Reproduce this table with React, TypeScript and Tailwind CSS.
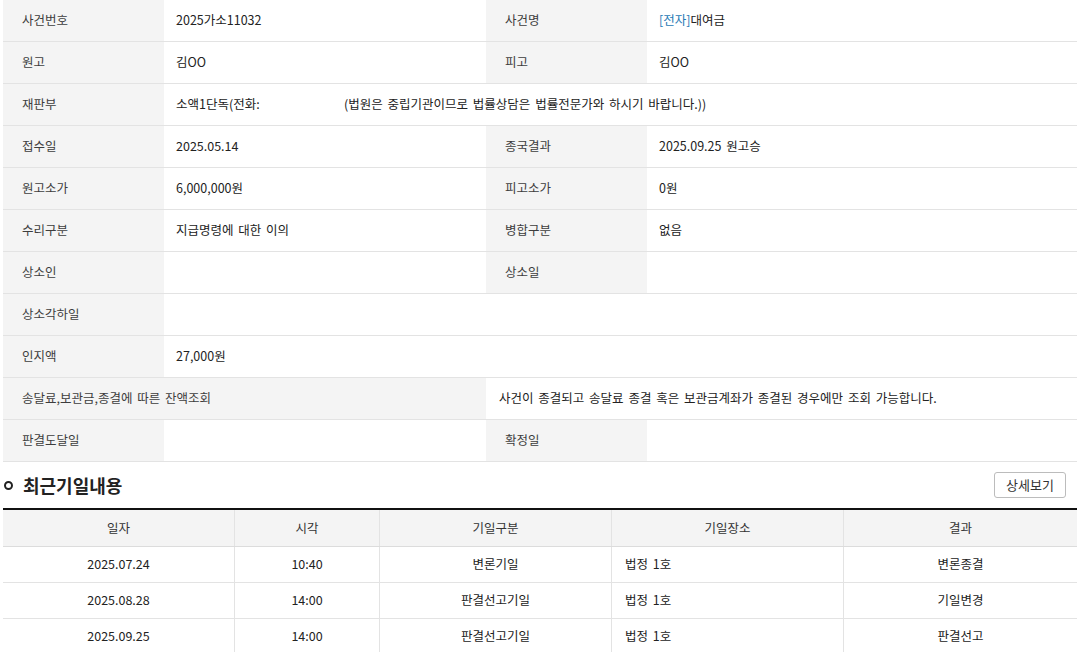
const font = { fontFamily: '"Noto Sans CJK KR", "Noto Sans", sans-serif' };

type Cell = { label: string; value?: React.ReactNode; span?: boolean };

const rows: (Cell[] | "money")[] = [
  [
    { label: "사건번호", value: "2025가소11032" },
    {
      label: "사건명",
      value: (
        <>
          <span className="text-[#1f7ab5]">[전자]</span>대여금
        </>
      ),
    },
  ],
  [
    { label: "원고", value: "김OO" },
    { label: "피고", value: "김OO" },
  ],
  [
    {
      label: "재판부",
      value: (
        <>
          <span className="inline-block w-[168px]">소액1단독(전화:</span>
          (법원은 중립기관이므로 법률상담은 법률전문가와 하시기 바랍니다.))
        </>
      ),
      span: true,
    },
  ],
  [
    { label: "접수일", value: "2025.05.14" },
    { label: "종국결과", value: "2025.09.25 원고승" },
  ],
  [
    { label: "원고소가", value: "6,000,000원" },
    { label: "피고소가", value: "0원" },
  ],
  [
    { label: "수리구분", value: "지급명령에 대한 이의" },
    { label: "병합구분", value: "없음" },
  ],
  [
    { label: "상소인", value: "" },
    { label: "상소일", value: "" },
  ],
  [{ label: "상소각하일", value: "", span: true }],
  [{ label: "인지액", value: "27,000원", span: true }],
  "money",
  [
    { label: "판결도달일", value: "" },
    { label: "확정일", value: "" },
  ],
];

const hearings = [
  ["2025.07.24", "10:40", "변론기일", "법정 1호", "변론종결"],
  ["2025.08.28", "14:00", "판결선고기일", "법정 1호", "기일변경"],
  ["2025.09.25", "14:00", "판결선고기일", "법정 1호", "판결선고"],
];

function Label({ children, wide = false }: { children: React.ReactNode; wide?: boolean }) {
  return (
    <div
      className={`flex h-[42px] items-center border-b border-[#e3e3e3] bg-[#f4f4f4] pl-[19px] text-[#3d3d3d] ${
        wide ? "col-span-2" : ""
      }`}
    >
      {children}
    </div>
  );
}

function Value({ children, span = false }: { children?: React.ReactNode; span?: boolean }) {
  return (
    <div
      className={`flex h-[42px] items-center whitespace-nowrap border-b border-[#e3e3e3] bg-white pl-[12px] text-[#222] ${
        span ? "col-span-3" : ""
      }`}
    >
      {children}
    </div>
  );
}

export default function App() {
  return (
    <div className="min-h-[652px] w-[1085px] bg-white text-[12.5px] [word-spacing:2px]" style={font}>
      <div className="ml-[3px] w-[1074px]">
        {/* Case info */}
        <div className="grid grid-cols-[161px_322px_161px_430px]">
          {rows.map((row, i) => {
            if (row === "money") {
              return [
                <Label key={`m${i}`} wide>
                  송달료,보관금,종결에 따른 잔액조회
                </Label>,
                <div
                  key={`mv${i}`}
                  className="col-span-2 flex h-[42px] items-center border-b border-[#e3e3e3] pl-[13px] text-[#222]"
                >
                  사건이 종결되고 송달료 종결 혹은 보관금계좌가 종결된 경우에만 조회 가능합니다.
                </div>,
              ];
            }
            return row.map((c, j) => [
              <Label key={`l${i}-${j}`}>{c.label}</Label>,
              <Value key={`v${i}-${j}`} span={c.span}>
                {c.value}
              </Value>,
            ]);
          })}
        </div>

        {/* Recent hearings header */}
        <div className="flex h-[46px] items-center justify-between">
          <div className="flex items-center gap-[10px] pl-[1px]">
            <span className="h-[9px] w-[9px] rounded-full border-2 border-[#222]" />
            <h2 className="text-[18px] font-bold text-[#222]">최근기일내용</h2>
          </div>
          <button className="mr-[11px] h-[26px] w-[72px] rounded-[3px] border border-[#bcbcbc] bg-white text-[13px] text-[#333]">
            상세보기
          </button>
        </div>

        {/* Hearings table */}
        <div className="border-t-2 border-[#111]">
          <div className="grid h-[37px] grid-cols-[232px_145px_232px_232px_233px] border-b border-[#dcdcdc] bg-[#f4f4f4] text-[#333]">
            {["일자", "시각", "기일구분", "기일장소", "결과"].map((h, i) => (
              <div
                key={h}
                className={`flex items-center justify-center ${i < 4 ? "border-r border-[#e3e3e3]" : ""}`}
              >
                {h}
              </div>
            ))}
          </div>
          {hearings.map((r, ri) => (
            <div
              key={ri}
              className="grid h-[36px] grid-cols-[232px_145px_232px_232px_233px] border-b border-[#e3e3e3] text-[#222]"
            >
              {r.map((c, i) => (
                <div
                  key={i}
                  className={`flex items-center ${i === 3 ? "justify-start pl-[13px]" : "justify-center"} ${
                    i < 4 ? "border-r border-[#e3e3e3]" : ""
                  }`}
                >
                  {c}
                </div>
              ))}
            </div>
          ))}
        </div>
      </div>
    </div>
  );
}
